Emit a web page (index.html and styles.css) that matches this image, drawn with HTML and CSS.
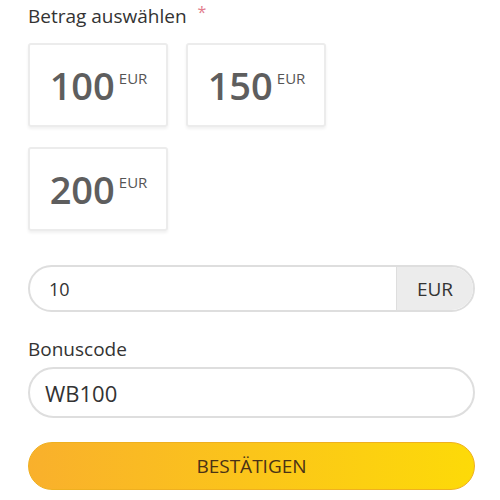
FILE: index.html
```html
<!DOCTYPE html>
<html lang="de">
<head>
<meta charset="utf-8">
<link rel="stylesheet" href="styles.css">
</head>
<body>
<main class="page">
  <div class="label">Betrag auswählen<span class="req">*</span></div>
  <div class="amounts">
    <div class="amount"><span class="num">100</span><span class="cur">EUR</span></div>
    <div class="amount"><span class="num">150</span><span class="cur">EUR</span></div>
    <div class="amount"><span class="num">200</span><span class="cur">EUR</span></div>
  </div>
  <div class="field field-amount">
    <span class="value">10</span>
    <span class="addon">EUR</span>
  </div>
  <div class="label label-bonus">Bonuscode</div>
  <div class="field field-bonus"><span class="value">WB100</span></div>
  <button class="submit">BESTÄTIGEN</button>
</main>
</body>
</html>
```
FILE: styles.css
```css
html, body {
  margin: 0;
  padding: 0;
  background: #fff;
  height: 100%;
}
body {
  font-family: "Open Sans", "Liberation Sans", sans-serif;
  color: #333;
}
.page {
  padding: 4px 25px 0 28px;
  box-sizing: border-box;
}
.label {
  font-size: 19px;
  line-height: 24px;
  color: #333;
}
.req {
  color: #e27d8c;
  font-size: 16px;
  margin-left: 11px;
  vertical-align: top;
  line-height: 16px;
  position: relative;
  top: 0;
}
.amounts {
  margin-top: 15px;
  display: grid;
  grid-template-columns: 140px 140px;
  column-gap: 18px;
  row-gap: 20px;
}
.amount {
  height: 84px;
  box-sizing: border-box;
  border: 2px solid #ececec;
  border-radius: 3px;
  box-shadow: 0 2px 3px rgba(0,0,0,0.06);
  display: flex;
  align-items: center;
  justify-content: center;
  padding-left: 1px;
}
.num {
  font-size: 38px;
  font-weight: 600;
  color: #5e5e5e;
  line-height: 1;
}
.cur {
  font-size: 15px;
  color: #555;
  align-self: flex-start;
  margin-top: 23px;
  margin-left: 4px;
}
.field {
  box-sizing: border-box;
  border: 2px solid #dedede;
  border-radius: 30px;
  display: flex;
  align-items: center;
  overflow: hidden;
}
.field-amount {
  margin-top: 34px;
  height: 47px;
}
.field-amount .value {
  flex: 1;
  padding-left: 19px;
  font-size: 18px;
  color: #333;
}
.addon {
  align-self: stretch;
  width: 76px;
  background: #ececec;
  border-left: 1px solid #dedede;
  display: flex;
  align-items: center;
  justify-content: center;
  font-size: 19px;
  color: #333;
}
.label-bonus {
  margin-top: 25px;
}
.field-bonus {
  margin-top: 6px;
  height: 51px;
}
.field-bonus .value {
  padding-left: 15px;
  font-size: 22px;
  color: #333;
}
.submit {
  display: block;
  width: 100%;
  margin-top: 24px;
  height: 48px;
  border: 1px solid #efb020;
  border-radius: 30px;
  background: linear-gradient(to right, #f9b02c, #fdda08);
  font-family: "Open Sans", "Liberation Sans", sans-serif;
  font-size: 19px;
  color: #4a3216;
  padding: 0;
}
```
